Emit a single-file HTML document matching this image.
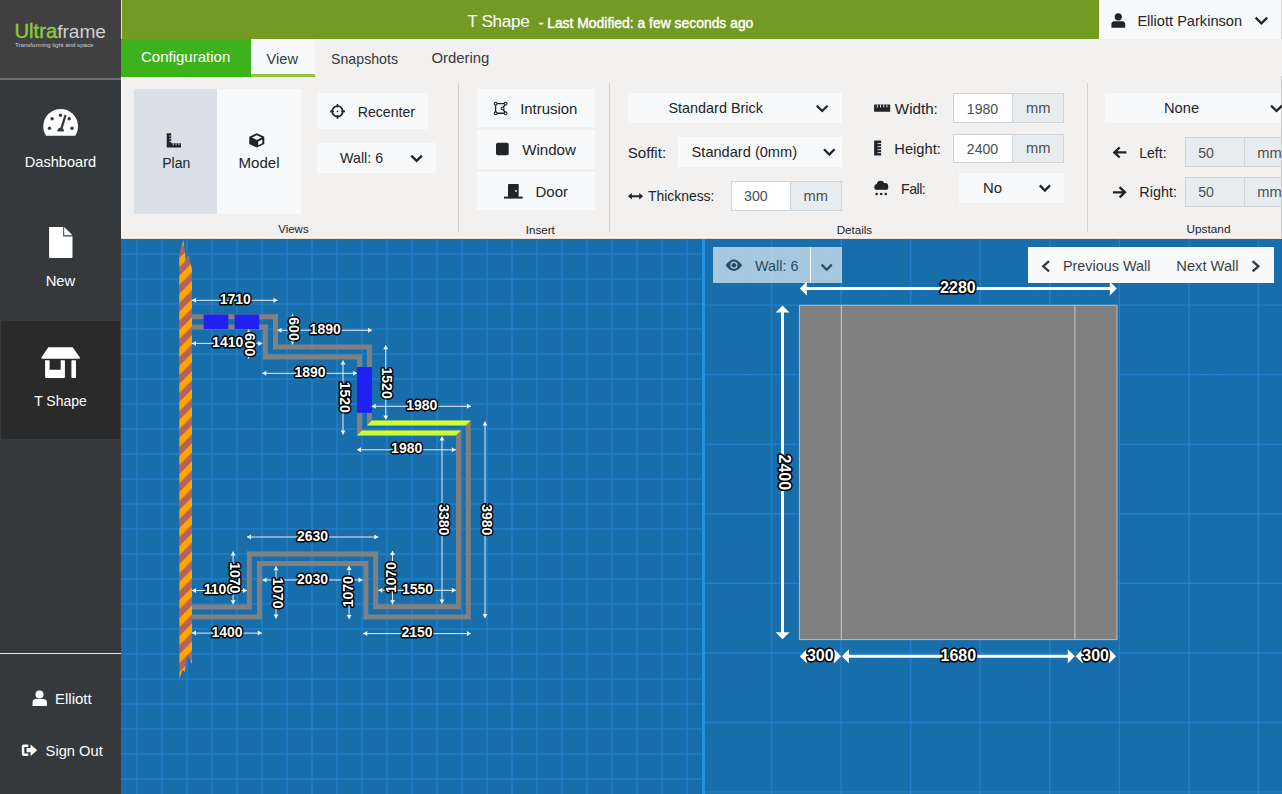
<!DOCTYPE html>
<html><head><meta charset="utf-8">
<style>
*{box-sizing:border-box;margin:0;padding:0}
html,body{width:1282px;height:794px;overflow:hidden;background:#f2f1ef;font-family:"Liberation Sans",sans-serif;color:#212529}
.a{position:absolute}
.t{position:absolute;white-space:nowrap;line-height:1}
.btn{position:absolute;background:#f8f9fa}
svg{position:absolute;overflow:visible}
</style></head><body>

<!-- SIDEBAR -->
<div class="a" style="left:0;top:0;width:121px;height:794px;background:#35393c"></div>
<div class="a" style="left:0;top:0;width:121px;height:78px;background:#404040"></div>
<div class="a" style="left:0;top:78px;width:121px;height:2px;background:#6e6e6e"></div>
<div class="a" style="left:1px;top:321px;width:119px;height:118px;background:#2a2a2a"></div>
<div class="a" style="left:0;top:653px;width:121px;height:1px;background:#e8e8e8"></div>
<div class="a" style="left:121px;top:0;width:1px;height:39px;background:#dcdcdc"></div>

<div id="sidebar-text">
<div class="t" style="left:14.5px;top:20.6px;font-size:20.2px;color:#8cc63f;-webkit-text-stroke:0.5px #8cc63f">Ultra<span style="color:#d0d0d0;font-size:19.1px;-webkit-text-stroke:0">frame</span></div>
<div class="t" style="left:15px;top:41.5px;font-size:6.1px;color:#d0d0d0">Transforming light and space</div>
<div class="t" style="left:0;width:121px;text-align:center;top:155.2px;font-size:14.6px;color:#fff">Dashboard</div>
<div class="t" style="left:0;width:121px;text-align:center;top:274px;font-size:14.8px;color:#fff">New</div>
<div class="t" style="left:0;width:121px;text-align:center;top:394px;font-size:14px;color:#fff">T Shape</div>
<div class="t" style="left:55px;top:691.3px;font-size:15px;color:#fff">Elliott</div>
<div class="t" style="left:45.6px;top:743.5px;font-size:14.7px;color:#fff">Sign Out</div>
</div>

<!-- HEADER -->
<div class="a" style="left:122px;top:0;width:1160px;height:39px;background:#739b24"></div>
<div class="t" style="left:467.2px;top:12.9px;font-size:17.2px;color:#fff;letter-spacing:-0.35px">T Shape</div>
<div class="t" style="left:538.7px;top:17.1px;font-size:13.9px;color:#fff;-webkit-text-stroke:0.4px #fff">- Last Modified: a few seconds ago</div>
<div class="a" style="left:1099px;top:0;width:183px;height:39px;background:#f8f9fa"></div>
<div class="a" style="left:1281px;top:0;width:1px;height:39px;background:#d8d8d8"></div>
<div class="t" style="left:1137.4px;top:14.3px;font-size:14.6px;color:#212529">Elliott Parkinson</div>

<!-- TABS -->
<div class="a" style="left:121px;top:39px;width:130px;height:37.5px;background:#3cb31c"></div>
<div class="t" style="left:141px;top:49.1px;font-size:15px;color:#fff">Configuration</div>
<div class="a" style="left:251px;top:39px;width:64px;height:35px;background:#f8f9fa"></div>
<div class="a" style="left:251px;top:74px;width:64px;height:2.6px;background:#95c13d"></div>
<div class="t" style="left:266.6px;top:51.9px;font-size:14.6px;color:#343a40">View</div>
<div class="t" style="left:331px;top:51.9px;font-size:14.2px;color:#343a40">Snapshots</div>
<div class="t" style="left:431.4px;top:51.3px;font-size:14.9px;color:#343a40">Ordering</div>

<!-- RIBBON -->
<div id="ribbon">
<div class="a" style="left:121px;top:76.5px;width:1.5px;height:161px;background:#f6f6f4"></div>
<div class="a" style="left:121px;top:237px;width:1161px;height:1px;background:#f8f8f7"></div>
<div class="a" style="left:121px;top:238px;width:1161px;height:1px;background:#e8ddd0"></div>
<!-- Views -->
<div class="btn" style="left:134px;top:89px;width:83px;height:124.6px;background:#dae0e5"></div>
<div class="btn" style="left:217px;top:89px;width:84px;height:124.6px"></div>
<div class="t" style="left:162.2px;top:156px;font-size:14px">Plan</div>
<div class="t" style="left:238.5px;top:155px;font-size:15.1px">Model</div>
<div class="btn" style="left:317px;top:93px;width:111px;height:36px"></div>
<div class="t" style="left:357.8px;top:105px;font-size:14.1px">Recenter</div>
<div class="btn" style="left:317px;top:143px;width:119px;height:30px"></div>
<div class="t" style="left:340px;top:150.7px;font-size:14.3px">Wall: 6</div>
<div class="t" style="left:278.2px;top:224.3px;font-size:11.5px">Views</div>
<div class="a" style="left:458px;top:83px;width:1px;height:149px;background:#d2d2d2"></div>
<!-- Insert -->
<div class="btn" style="left:477px;top:89px;width:118px;height:37.6px"></div>
<div class="btn" style="left:477px;top:130px;width:118px;height:39px"></div>
<div class="btn" style="left:477px;top:172px;width:118px;height:38px"></div>
<div class="t" style="left:520.2px;top:101.5px;font-size:14.9px">Intrusion</div>
<div class="t" style="left:522.2px;top:142.3px;font-size:15.1px">Window</div>
<div class="t" style="left:535.5px;top:184.2px;font-size:15px">Door</div>
<div class="t" style="left:525.8px;top:224.3px;font-size:11.6px">Insert</div>
<div class="a" style="left:609px;top:83px;width:1px;height:149px;background:#d2d2d2"></div>
<!-- Details -->
<div class="btn" style="left:628px;top:93px;width:214px;height:30px"></div>
<div class="t" style="left:668.5px;top:100.6px;font-size:14.4px">Standard Brick</div>
<div class="t" style="left:627.8px;top:145px;font-size:15.1px">Soffit:</div>
<div class="btn" style="left:678px;top:137px;width:164px;height:29.6px"></div>
<div class="t" style="left:691.6px;top:145.4px;font-size:14.6px">Standard (0mm)</div>
<div class="t" style="left:648px;top:190px;font-size:13.9px">Thickness:</div>
<div class="a" style="left:731px;top:181px;width:60px;height:29.6px;background:#fff;border:1px solid #ced4da"></div>
<div class="a" style="left:790px;top:181px;width:52px;height:29.6px;background:#e9ecef;border:1px solid #ced4da"></div>
<div class="t" style="left:744px;top:189.2px;font-size:14.2px;color:#495057">300</div>
<div class="t" style="left:803.5px;top:189.2px;font-size:14.7px;color:#495057">mm</div>

<div class="t" style="left:894.8px;top:101.3px;font-size:15.2px">Width:</div>
<div class="a" style="left:953px;top:93px;width:60px;height:29.6px;background:#fff;border:1px solid #ced4da"></div>
<div class="a" style="left:1012px;top:93px;width:52px;height:29.6px;background:#e9ecef;border:1px solid #ced4da"></div>
<div class="t" style="left:966.8px;top:102.3px;font-size:14.1px;color:#495057">1980</div>
<div class="t" style="left:1025.9px;top:101.3px;font-size:14.7px;color:#495057">mm</div>

<div class="t" style="left:894.3px;top:142.3px;font-size:14.7px">Height:</div>
<div class="a" style="left:953px;top:133.5px;width:60px;height:29px;background:#fff;border:1px solid #ced4da"></div>
<div class="a" style="left:1012px;top:133.5px;width:52px;height:29px;background:#e9ecef;border:1px solid #ced4da"></div>
<div class="t" style="left:966.8px;top:142px;font-size:14.1px;color:#495057">2400</div>
<div class="t" style="left:1025.9px;top:141.3px;font-size:14.7px;color:#495057">mm</div>

<div class="t" style="left:901px;top:181.8px;font-size:14.2px;letter-spacing:-0.5px">Fall:</div>
<div class="btn" style="left:959px;top:173px;width:105px;height:29.7px"></div>
<div class="t" style="left:983px;top:181.2px;font-size:14.9px">No</div>
<div class="t" style="left:836.7px;top:224.3px;font-size:11.6px">Details</div>
<div class="a" style="left:1087px;top:83px;width:1px;height:149px;background:#d2d2d2"></div>
<!-- Upstand -->
<div class="btn" style="left:1105px;top:93px;width:177px;height:29.5px"></div>
<div class="t" style="left:1164px;top:100.6px;font-size:14.7px">None</div>
<div class="t" style="left:1139.3px;top:145.8px;font-size:14px">Left:</div>
<div class="a" style="left:1185px;top:137px;width:60px;height:29.6px;background:#e9ecef;border:1px solid #ced4da"></div>
<div class="a" style="left:1244px;top:137px;width:52px;height:29.6px;background:#e9ecef;border:1px solid #ced4da"></div>
<div class="t" style="left:1198.2px;top:145.8px;font-size:14.1px;color:#495057">50</div>
<div class="t" style="left:1257.2px;top:145.8px;font-size:14.7px;color:#495057">mm</div>
<div class="t" style="left:1139.3px;top:185.4px;font-size:14.4px">Right:</div>
<div class="a" style="left:1185px;top:177px;width:60px;height:29.6px;background:#e9ecef;border:1px solid #ced4da"></div>
<div class="a" style="left:1244px;top:177px;width:52px;height:29.6px;background:#e9ecef;border:1px solid #ced4da"></div>
<div class="t" style="left:1198.2px;top:185.4px;font-size:14.1px;color:#495057">50</div>
<div class="t" style="left:1257.2px;top:185.4px;font-size:14.7px;color:#495057">mm</div>
<div class="t" style="left:1186.5px;top:224.4px;font-size:11.8px">Upstand</div>
<div class="a" style="left:1281px;top:76px;width:1px;height:162px;background:#c8c8c8"></div>
</div>

<!-- CANVAS -->
<div class="a" style="left:121px;top:239px;width:1161px;height:555px;background:#176eab"></div>
<div class="a" style="left:702px;top:239px;width:3px;height:555px;background:#2590e3"></div>


<!-- PLAN SVG -->
<svg style="left:121px;top:239px" width="581" height="555" viewBox="121 239 581 555">
<path d="M137 239V794 M162 239V794 M187 239V794 M212 239V794 M237 239V794 M262 239V794 M287 239V794 M312 239V794 M337 239V794 M362 239V794 M387 239V794 M412 239V794 M437 239V794 M462 239V794 M487 239V794 M512 239V794 M537 239V794 M562 239V794 M587 239V794 M612 239V794 M637 239V794 M662 239V794 M687 239V794 M121 254H702 M121 279H702 M121 304H702 M121 329H702 M121 354H702 M121 379H702 M121 404H702 M121 429H702 M121 454H702 M121 479H702 M121 504H702 M121 529H702 M121 554H702 M121 579H702 M121 604H702 M121 629H702 M121 654H702 M121 679H702 M121 704H702 M121 729H702 M121 754H702 M121 779H702" stroke="#2382d0" stroke-opacity="0.75" stroke-width="1.6" fill="none"/>
<defs><pattern id="stripe" patternUnits="userSpaceOnUse" width="12.74" height="12.74" patternTransform="translate(179 420.3) rotate(45)"><rect width="12.74" height="12.74" fill="#b4635b"/><rect width="6.37" height="12.74" fill="#ffa500"/></pattern></defs>
<polygon points="179.2,255 183.5,239.8 186.1,262.6 188.4,255.7 192,268.7 192,664 187.3,654.2 185.8,664.7 184.8,671.9 182.4,670 179.4,679.1" fill="url(#stripe)"/>
<polyline points="192,316.7 275.5,316.7 275.5,347.1 369.5,347.1 369.5,423 468.25,423 468.25,616.9 365.85,616.9 365.85,563.6 259.4,563.6 259.4,617 192,617" fill="none" stroke="#808080" stroke-width="5" stroke-linejoin="miter"/>
<polyline points="192,326.9 265.4,326.9 265.4,357.1 359.5,357.1 359.5,433 458.45,433 458.45,606.8 375.65,606.8 375.65,554 249.3,554 249.3,607 192,607" fill="none" stroke="#808080" stroke-width="5" stroke-linejoin="miter"/>
<path d="M278 314.2L273 319.2 M273 349.6L278 344.6 M372 344.6L367 349.6 M367 425.5L372 420.5 M470.75 420.5L465.75 425.5 M470.75 619.4L465.75 614.4 M363.35 619.4L368.35 614.4 M368.35 561.1L363.35 566.1 M256.9 561.1L261.9 566.1 M261.9 619.5L256.9 614.5 M267.9 324.4L262.9 329.4 M262.9 359.6L267.9 354.6 M362 354.6L357 359.6 M357 435.5L362 430.5 M460.95 430.5L455.95 435.5 M460.95 609.3L455.95 604.3 M373.15 609.3L378.15 604.3 M378.15 551.5L373.15 556.5 M246.8 551.5L251.8 556.5 M251.8 609.5L246.8 604.5" stroke="#6a93b8" stroke-opacity="0.7" stroke-width="0.7" fill="none"/>
<polygon points="372,420.5 470.75,420.5 465.75,425.5 367,425.5" fill="#ccff33"/>
<polygon points="362,430.5 460.95,430.5 455.95,435.5 357,435.5" fill="#ccff33"/>
<rect x="203.6" y="314.5" width="24.7" height="14.6" fill="#2121f3"/>
<rect x="234.6" y="314.5" width="24.6" height="14.6" fill="#2121f3"/>
<rect x="357" y="367" width="15" height="45.8" fill="#2121f3"/>
<path d="M192 300.3H277.5 M192 343.4H262.3 M277.5 330.3H372 M262.3 373.3H357 M371.7 406.3H470.9 M357 449.8H455.8 M247 537H378.3 M262.5 580H362.6 M192 590.5H247 M378.3 590.3H455.8 M192 633.1H261.8 M363.2 633.6H470.9 M248.6 329.5V358.4 M292.5 314V344.4 M343 360.5V434.5 M385.7 345.3V419.4 M442 436.6V603.5 M485 421.5V618 M233.1 551.4V604.2 M276 566.2V618.6 M349.1 566.1V619 M392.5 551V604.3" stroke="#e6eef5" stroke-width="1" fill="none"/>
<path d="M192 300.3L196 297.8L196 302.8Z M277.5 300.3L273.5 302.8L273.5 297.8Z M192 343.4L196 340.9L196 345.9Z M262.3 343.4L258.3 345.9L258.3 340.9Z M277.5 330.3L281.5 327.8L281.5 332.8Z M372 330.3L368 332.8L368 327.8Z M262.3 373.3L266.3 370.8L266.3 375.8Z M357 373.3L353 375.8L353 370.8Z M371.7 406.3L375.7 403.8L375.7 408.8Z M470.9 406.3L466.9 408.8L466.9 403.8Z M357 449.8L361 447.3L361 452.3Z M455.8 449.8L451.8 452.3L451.8 447.3Z M247 537L251 534.5L251 539.5Z M378.3 537L374.3 539.5L374.3 534.5Z M262.5 580L266.5 577.5L266.5 582.5Z M362.6 580L358.6 582.5L358.6 577.5Z M192 590.5L196 588L196 593Z M247 590.5L243 593L243 588Z M378.3 590.3L382.3 587.8L382.3 592.8Z M455.8 590.3L451.8 592.8L451.8 587.8Z M192 633.1L196 630.6L196 635.6Z M261.8 633.1L257.8 635.6L257.8 630.6Z M363.2 633.6L367.2 631.1L367.2 636.1Z M470.9 633.6L466.9 636.1L466.9 631.1Z M248.6 329.5L251.1 333.5L246.1 333.5Z M248.6 358.4L246.1 354.4L251.1 354.4Z M292.5 314L295 318L290 318Z M292.5 344.4L290 340.4L295 340.4Z M343 360.5L345.5 364.5L340.5 364.5Z M343 434.5L340.5 430.5L345.5 430.5Z M385.7 345.3L388.2 349.3L383.2 349.3Z M385.7 419.4L383.2 415.4L388.2 415.4Z M442 436.6L444.5 440.6L439.5 440.6Z M442 603.5L439.5 599.5L444.5 599.5Z M485 421.5L487.5 425.5L482.5 425.5Z M485 618L482.5 614L487.5 614Z M233.1 551.4L235.6 555.4L230.6 555.4Z M233.1 604.2L230.6 600.2L235.6 600.2Z M276 566.2L278.5 570.2L273.5 570.2Z M276 618.6L273.5 614.6L278.5 614.6Z M349.1 566.1L351.6 570.1L346.6 570.1Z M349.1 619L346.6 615L351.6 615Z M392.5 551L395 555L390 555Z M392.5 604.3L390 600.3L395 600.3Z" fill="#f0f4f8"/>
<g font-family="Liberation Sans" font-size="14" font-weight="bold" text-anchor="middle" fill="#fff" stroke="#000" stroke-width="3" paint-order="stroke" stroke-linejoin="round"><text x="235.3" y="303.8">1710</text><text x="227.7" y="346.9">1410</text><text x="325.2" y="333.8">1890</text><text x="310" y="376.8">1890</text><text x="421.8" y="409.8">1980</text><text x="406.7" y="453.3">1980</text><text x="312.6" y="540.5">2630</text><text x="312.6" y="583.5">2030</text><text x="219" y="594">1100</text><text x="417.6" y="593.8">1550</text><text x="227" y="636.6">1400</text><text x="417" y="637.1">2150</text><text transform="translate(248.6 344.6) rotate(90)" x="0" y="3.5">600</text><text transform="translate(292.5 329) rotate(90)" x="0" y="3.5">600</text><text transform="translate(343 397.3) rotate(90)" x="0" y="3.5">1520</text><text transform="translate(385.7 383.1) rotate(90)" x="0" y="3.5">1520</text><text transform="translate(442 519.8) rotate(90)" x="0" y="3.5">3380</text><text transform="translate(485 519.8) rotate(90)" x="0" y="3.5">3980</text><text transform="translate(233.1 577.8) rotate(90)" x="0" y="3.5">1070</text><text transform="translate(276 593) rotate(90)" x="0" y="3.5">1070</text><text transform="translate(349.1 591.7) rotate(-90)" x="0" y="3.5">1070</text><text transform="translate(392.5 577.5) rotate(-90)" x="0" y="3.5">1070</text></g>
</svg>
<!-- /PLAN -->

<!-- ELEVATION -->
<svg style="left:705px;top:239px" width="577" height="555" viewBox="705 239 577 555">
<path d="M715.96 239V794 M729.87 239V794 M743.78 239V794 M757.69 239V794 M785.51 239V794 M799.42 239V794 M813.33 239V794 M827.24 239V794 M855.06 239V794 M868.97 239V794 M882.88 239V794 M896.79 239V794 M924.61 239V794 M938.52 239V794 M952.43 239V794 M966.34 239V794 M994.16 239V794 M1008.07 239V794 M1021.98 239V794 M1035.89 239V794 M1063.71 239V794 M1077.62 239V794 M1091.53 239V794 M1105.44 239V794 M1133.26 239V794 M1147.17 239V794 M1161.08 239V794 M1174.99 239V794 M1202.81 239V794 M1216.72 239V794 M1230.63 239V794 M1244.54 239V794 M1272.36 239V794 M705 249.46H1282 M705 263.37H1282 M705 277.28H1282 M705 291.19H1282 M705 319.01H1282 M705 332.92H1282 M705 346.83H1282 M705 360.74H1282 M705 388.56H1282 M705 402.47H1282 M705 416.38H1282 M705 430.29H1282 M705 458.11H1282 M705 472.02H1282 M705 485.93H1282 M705 499.84H1282 M705 527.66H1282 M705 541.57H1282 M705 555.48H1282 M705 569.39H1282 M705 597.21H1282 M705 611.12H1282 M705 625.03H1282 M705 638.94H1282 M705 666.76H1282 M705 680.67H1282 M705 694.58H1282 M705 708.49H1282 M705 736.31H1282 M705 750.22H1282 M705 764.13H1282 M705 778.04H1282" stroke="#2382d0" stroke-opacity="0.1" stroke-width="1" fill="none"/>
<path d="M771.6 239V794 M841.15 239V794 M910.7 239V794 M980.25 239V794 M1049.8 239V794 M1119.35 239V794 M1188.9 239V794 M1258.45 239V794 M705 305.1H1282 M705 374.65H1282 M705 444.2H1282 M705 513.75H1282 M705 583.3H1282 M705 652.85H1282 M705 722.4H1282 M705 791.95H1282" stroke="#2382d0" stroke-opacity="0.85" stroke-width="1.4" fill="none"/>
<rect x="799.4" y="305.3" width="317.6" height="334.3" fill="#808080" stroke="#bcbcbc" stroke-width="1"/>
<path d="M841.3 305.3V639.6M1074.9 305.3V639.6" stroke="#c8c8c8" stroke-width="1"/>
<path d="M802.8 288.5H1113.8 M802.8 656.3H838.1 M844.9 656.3H1071.8 M1078.6 656.3H1113.1 M782.5 309V636" stroke="#fff" stroke-width="3" fill="none"/>
<path d="M799.8 288.5L806.8 281.5L806.8 295.5Z M1116.8 288.5L1109.8 295.5L1109.8 281.5Z M799.8 656.3L806.8 649.3L806.8 663.3Z M841.1 656.3L834.1 663.3L834.1 649.3Z M841.9 656.3L848.9 649.3L848.9 663.3Z M1074.8 656.3L1067.8 663.3L1067.8 649.3Z M1075.6 656.3L1082.6 649.3L1082.6 663.3Z M1116.1 656.3L1109.1 663.3L1109.1 649.3Z M782.5 305.6L789.5 312.6L775.5 312.6Z M782.5 639.2L775.5 632.2L789.5 632.2Z" fill="#fff"/>
<g font-family="Liberation Sans" font-size="16" font-weight="bold" text-anchor="middle" fill="#fff" stroke="#000" stroke-width="3.2" paint-order="stroke" stroke-linejoin="round"><text x="957.9" y="293.1">2280</text><text x="820.3" y="660.9">300</text><text x="958.3" y="660.9">1680</text><text x="1095.6" y="660.9">300</text><text transform="translate(784 472.3) rotate(90)" x="0" y="4.6">2400</text></g>
</svg>
<!-- /ELEV -->

<!-- CANVAS BUTTONS -->
<div class="a" style="left:713px;top:247.2px;width:129px;height:35.4px;background:rgba(255,255,255,0.62)"></div>
<div class="a" style="left:810px;top:247.2px;width:1px;height:35.4px;background:rgba(255,255,255,0.85)"></div>
<div class="t" style="left:755px;top:258.6px;font-size:14.4px;color:#2c4b63">Wall: 6</div>
<div class="a" style="left:1027.8px;top:247.2px;width:246.2px;height:35.7px;background:#f8f9fa"></div>
<div class="t" style="left:1062.9px;top:258.5px;font-size:14.4px;color:#3d4246">Previous Wall</div>
<div class="t" style="left:1176.3px;top:258.5px;font-size:14.7px;color:#3d4246">Next Wall</div>
<!-- /CANVAS BUTTONS -->
<!-- ICONS -->
<svg style="left:0;top:0" width="1282" height="794" viewBox="0 0 1282 794">
<g fill="#fff">
<path d="M46.1 135.8A17.35 17.35 0 1 1 75.2 135.8Z"/>
<path d="M49.1 227H63.2V236.4H72.5V257.2Q72.5 258 71.7 258H49.9Q49.1 258 49.1 257.2Z"/>
<path d="M64.2 227L72.5 235.3H64.2Z"/>
<path d="M48.3 347.3H72.7L79.9 357.5Q80.2 358.8 78.8 358.8H42.5Q41.1 358.8 41.4 357.5Z"/>
<path d="M45.1 360.3H49.6V369.8H60.7V360.3H64.9V376.9Q64.9 377.9 63.9 377.9H46.1Q45.1 377.9 45.1 376.9Z"/>
<rect x="71.4" y="360.3" width="4.6" height="17.6" rx="0.6"/>
<circle cx="39.5" cy="694.5" r="4"/>
<path d="M32.5 706V702.5Q32.5 699 36 699H43.4Q46.9 699 46.9 702.5V706Z"/>
<path d="M28.3 744.5H23.6Q21.8 744.5 21.8 746.3V754.1Q21.8 755.9 23.6 755.9H28.3V753.5H24.3V746.9H28.3Z"/>
<path d="M26.6 748.1H30.6V744.5L37.2 750.2L30.6 755.9V752.3H26.6Z"/>
</g>
<g fill="#343a40">
<circle cx="52.1" cy="118.8" r="1.7"/><circle cx="60.5" cy="115.3" r="1.7"/><circle cx="69.2" cy="118.8" r="1.7"/><circle cx="49.5" cy="128.2" r="1.7"/><circle cx="72" cy="128.2" r="1.7"/>
<path d="M64.6 114.6L66.6 115.4L62.6 128.5L60.3 128Z"/>
<path d="M57.4 131.5A3.3 3.3 0 1 1 63.9 131.5Z"/>
</g>
<g fill="#212529">
<circle cx="1118.3" cy="16.8" r="3.6"/>
<path d="M1111.4 27.7V24.3Q1111.4 21.3 1114.4 21.3H1122.2Q1125.2 21.3 1125.2 24.3V27.7Z"/>
<path d="M166.7 133.2H171.2V143.3H181V147.6H166.7Z"/>
<path d="M256.8 133.2L264.3 136.8V144L256.8 147.6L249.3 144V136.8Z"/>
<rect x="496" y="142.7" width="12.7" height="12.6" rx="1.8"/>
<rect x="508" y="184" width="10.7" height="13" rx="0.8"/>
<rect x="504" y="196.6" width="18.7" height="2"/>
<path d="M627.9 196.2L631.9 192.9V195.2H639.2V192.9L643.2 196.2L639.2 199.6V197.2H631.9V199.6Z"/>
<rect x="874.1" y="104.6" width="16.1" height="7.2" rx="0.5"/>
<rect x="874.1" y="140.6" width="7" height="15" rx="0.5"/>
<circle cx="880.6" cy="184.6" r="3.8"/><circle cx="885" cy="186.2" r="3.2"/><circle cx="877.2" cy="186.8" r="2.8"/>
<rect x="874.4" y="186" width="13.9" height="3.7" rx="1.8"/>
<circle cx="876.6" cy="194" r="1.3"/><circle cx="881.2" cy="194" r="1.3"/><circle cx="885.8" cy="194" r="1.3"/>
</g>
<g stroke="#f2f1ef" stroke-width="0.9">
<path d="M877.3 104.6V107.5M880.5 104.6V107.5M883.7 104.6V107.5M886.9 104.6V107.5"/>
<path d="M877.6 143.6H881.1M877.6 146.6H881.1M877.6 149.6H881.1M877.6 152.6H881.1"/>
</g>
<g stroke="#dae0e5" stroke-width="0.9">
<path d="M169.3 136H171.2M169.3 138.8H171.2M169.3 141.6H171.2M173.3 143.3V145.2M176.1 143.3V145.2M178.9 143.3V145.2"/>
</g>
<g fill="#f8f9fa">
<path d="M256.8 135.3L261.7 137.6L256.8 139.9L251.9 137.6Z"/>
<path d="M258.2 141.4L262.3 139.4V143.3L258.2 145.3Z"/>
</g>
<circle cx="516" cy="190.9" r="0.9" fill="#f8f9fa"/>
<g fill="none" stroke="#212529" stroke-width="1.7">
<circle cx="337.5" cy="111.3" r="5.3"/>
<path d="M330.1 111.3H333.8M341.2 111.3H345M337.5 103.9V107.6M337.5 115V118.8"/>
</g>
<circle cx="337.5" cy="111.3" r="0.9" fill="#212529"/>
<g fill="none" stroke="#212529" stroke-width="1.4">
<path d="M495.6 103.6H505.6L502.6 108.4L505.6 113.3H495.6Z"/>
</g>
<g fill="#f8f9fa" stroke="#212529" stroke-width="1.1">
<circle cx="495.6" cy="103.6" r="1.4"/><circle cx="505.6" cy="103.6" r="1.4"/><circle cx="502.6" cy="108.4" r="1.4"/><circle cx="505.6" cy="113.3" r="1.4"/><circle cx="495.6" cy="113.3" r="1.4"/>
</g>
<g fill="none" stroke="#212529" stroke-width="2.3" stroke-linecap="butt" stroke-linejoin="miter">
<path d="M1255.6 17.6L1261.4 23.3L1267.2 17.6"/>
<path d="M411.3 155.6L416.6 160.9L421.9 155.6"/>
<path d="M816.8 105.7L822.2 111L827.6 105.7"/>
<path d="M824 149.3L829.3 154.6L834.6 149.3"/>
<path d="M1039.8 185.4L1044.9 190.6L1050 185.4"/>
<path d="M1271 105.7L1276.5 111L1282 105.7"/>
<path d="M1126.4 152.4H1114.6M1119.7 147.3L1114.3 152.4L1119.7 157.5"/>
<path d="M1112.9 192.3H1124.7M1119.6 187.2L1125 192.3L1119.6 197.4"/>
<path d="M1049 261.2L1043.2 266.3L1049 271.4" stroke="#343a40"/>
<path d="M1252.6 261.2L1258.4 266.3L1252.6 271.4" stroke="#343a40"/>
</g>
<path d="M725.6 265.2Q733.9 253.8 742.2 265.2Q733.9 276.6 725.6 265.2Z" fill="#2c4b63"/>
<circle cx="733.9" cy="265.2" r="3.6" fill="#a9c8de"/>
<circle cx="733.9" cy="265.2" r="2.3" fill="#2c4b63"/>
<path d="M821.6 264.6L826.7 269.7L831.8 264.6" fill="none" stroke="#2c4b63" stroke-width="2.2"/>
</svg>
<!-- /ICONS -->
</body></html>
